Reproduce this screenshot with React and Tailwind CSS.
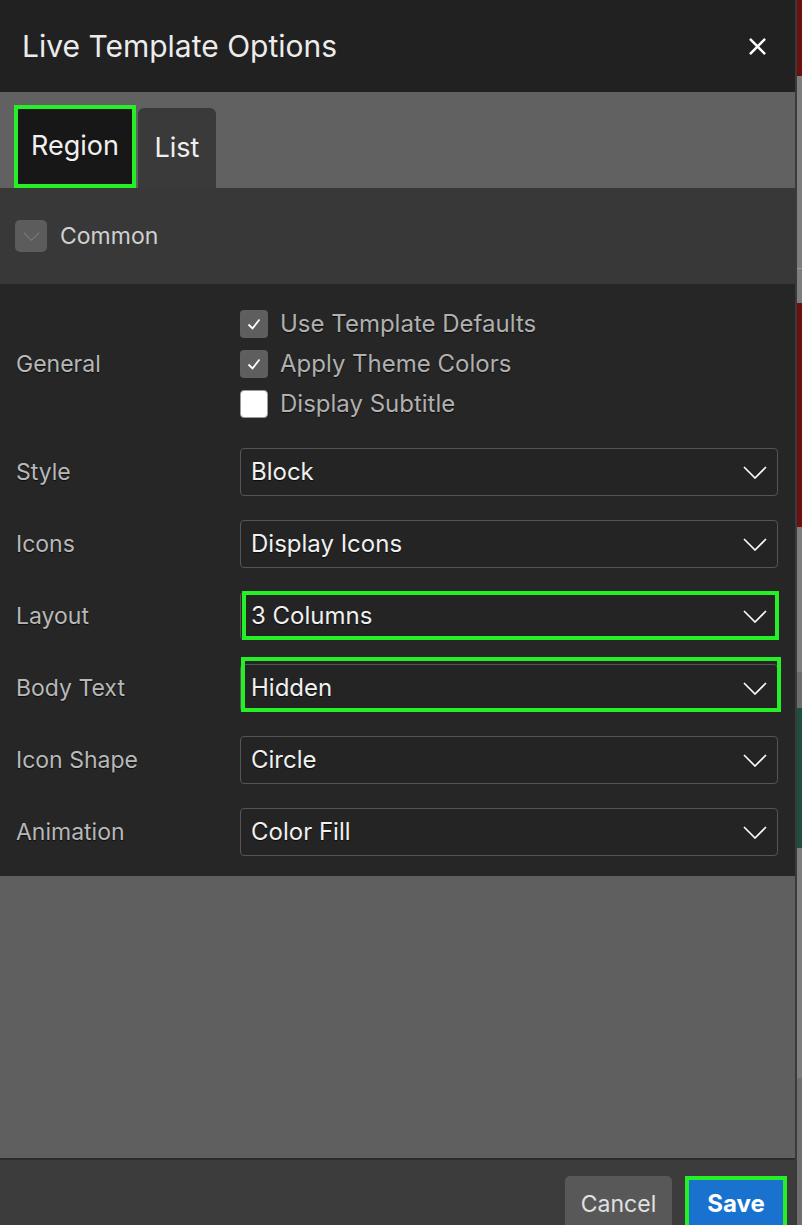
import { useState } from 'react';

const checks = [
  { label: 'Use Template Defaults', on: true },
  { label: 'Apply Theme Colors', on: true },
  { label: 'Display Subtitle', on: false },
];

const selects = [
  { label: 'Style', value: 'Block' },
  { label: 'Icons', value: 'Display Icons' },
  { label: 'Layout', value: '3 Columns', mark: 'layout' },
  { label: 'Body Text', value: 'Hidden', mark: 'body' },
  { label: 'Icon Shape', value: 'Circle' },
  { label: 'Animation', value: 'Color Fill' },
];

// highlight frames drawn over the fields (annotation, not layout)
const marks = {
  layout: 'top-[-2px] bottom-[-1px] left-[1px] right-[-2px]',
  body: 'top-[-8px] bottom-[-1px] left-0 right-[-4px]',
};

// the page behind the dialog, only a thin strip shows
const strip = [
  { h: 'h-[76px]', c: 'bg-[#6a1010]' },
  { h: 'h-[192px]', c: 'bg-[#7d7d7d]' },
  { h: 'h-[35px]', c: 'bg-[#7d7d7d] border-t border-[#9a9a9a]' },
  { h: 'h-[224px]', c: 'bg-[#6a1010]' },
  { h: 'h-[145px]', c: 'bg-[#7d7d7d]' },
  { h: 'h-[36px]', c: 'bg-[#6c6c6c]' },
  { h: 'h-[140px]', c: 'bg-[#1f4f3c]' },
  { h: 'h-[230px]', c: 'bg-[#7d7d7d]' },
  { h: 'flex-1', c: 'bg-[#6e6e6e]' },
];

function Chevron({ className }) {
  return (
    <svg viewBox="0 0 24 13" className={className} fill="none" stroke="currentColor" strokeWidth="1.6">
      <polyline points="1,1 12,12 23,1" />
    </svg>
  );
}

function CheckBox({ on }) {
  return on ? (
    <span className="flex h-[28px] w-[28px] items-center justify-center rounded-[4px] bg-[#5e5e5e]">
      <svg viewBox="0 0 16 16" className="h-[16px] w-[16px]" fill="none" stroke="#fff" strokeWidth="1.8">
        <polyline points="2.5,8.5 6.5,12.5 13.5,3.5" />
      </svg>
    </span>
  ) : (
    <span className="h-[28px] w-[28px] rounded-[4px] border border-[#9a9a9a] bg-white" />
  );
}

function SelectBox({ value, mark }) {
  return (
    <div className="relative flex h-[48px] items-center justify-between rounded-[4px] border border-[#555] bg-[#242424] pl-[10px] pr-[10px]">
      <span className="text-[24px] text-[#f0f0f0]">{value}</span>
      <Chevron className="h-[13px] w-[24px] text-white" />
      {mark ? <span className={`pointer-events-none absolute border-4 border-[#25f025] ${marks[mark]}`} /> : null}
    </div>
  );
}

export default function App() {
  const [tab] = useState('Region');

  return (
    <div className="flex h-[1225px] w-[802px] overflow-hidden bg-[#5f5f5f] font-[Inter,Roboto,sans-serif]">
      <div className="flex w-[795px] flex-col">
        <header className="flex h-[92px] items-center justify-between bg-[#212121] pl-[22px] pr-[29px]">
          <h1 className="text-[30px] text-[#ececec]">Live Template Options</h1>
          <svg viewBox="0 0 18 18" className="h-[17px] w-[17px]" fill="none" stroke="#fff" strokeWidth="2.6">
            <line x1="1" y1="1" x2="17" y2="17" />
            <line x1="17" y1="1" x2="1" y2="17" />
          </svg>
        </header>

        <div className="flex h-[96px] items-end gap-[2px] bg-[#616161] pl-[14px]">
          <button
            className={`h-[83px] w-[122px] border-4 border-[#25f025] text-[27px] text-[#f0f0f0] ${
              tab === 'Region' ? 'bg-[#171717]' : 'bg-[#3a3a3a]'
            }`}
          >
            Region
          </button>
          <button className="h-[80px] w-[78px] rounded-t-[6px] bg-[#3a3a3a] text-[27px] text-[#f0f0f0]">List</button>
        </div>

        <div className="flex h-[96px] items-center gap-[13px] bg-[#383838] pl-[15px]">
          <span className="flex h-[32px] w-[32px] items-center justify-center rounded-[5px] bg-[#5c5c5c]">
            <Chevron className="h-[9px] w-[17px] text-[#7a7a7a]" />
          </span>
          <span className="text-[23px] text-[#d0d0d0]">Common</span>
        </div>

        <div className="grid grid-cols-[224px_1fr] items-center gap-y-[24px] bg-[#262626] pb-[20px] pl-[16px] pr-[17px] pt-[20px] [text-shadow:0_1px_1px_rgba(0,0,0,0.7)]">
          <span className="text-[23px] text-[#b8b8b8]">General</span>
          <div className="flex flex-col">
            {checks.map((c) => (
              <label key={c.label} className="flex h-[40px] items-center gap-[12px]">
                <CheckBox on={c.on} />
                <span className="text-[24px] text-[#b0b0b0]">{c.label}</span>
              </label>
            ))}
          </div>
          {selects.map((s) => (
            <div key={s.label} className="contents">
              <span className="text-[23px] text-[#b8b8b8]">{s.label}</span>
              <SelectBox value={s.value} mark={s.mark} />
            </div>
          ))}
        </div>

        <div className="flex-1 bg-[#5f5f5f]" />

        <footer className="flex h-[67px] items-start justify-end gap-[13px] border-t-2 border-[#2c2c2c] bg-[#3c3c3c] pr-[8px] pt-[16px]">
          <button className="h-[56px] w-[107px] rounded-[5px] bg-[#585858] text-[23px] text-[#e0e0e0]">Cancel</button>
          <button className="h-[56px] w-[102px] border-[4px] border-[#25f025] bg-[#1a72cf] text-[24px] font-bold text-white">
            Save
          </button>
        </footer>
      </div>
      <div className="w-[2px] bg-[#3a3a3a]" />
      <div className="flex flex-1 flex-col">
        {strip.map((s, i) => (
          <div key={i} className={`${s.h} ${s.c}`} />
        ))}
      </div>
    </div>
  );
}
